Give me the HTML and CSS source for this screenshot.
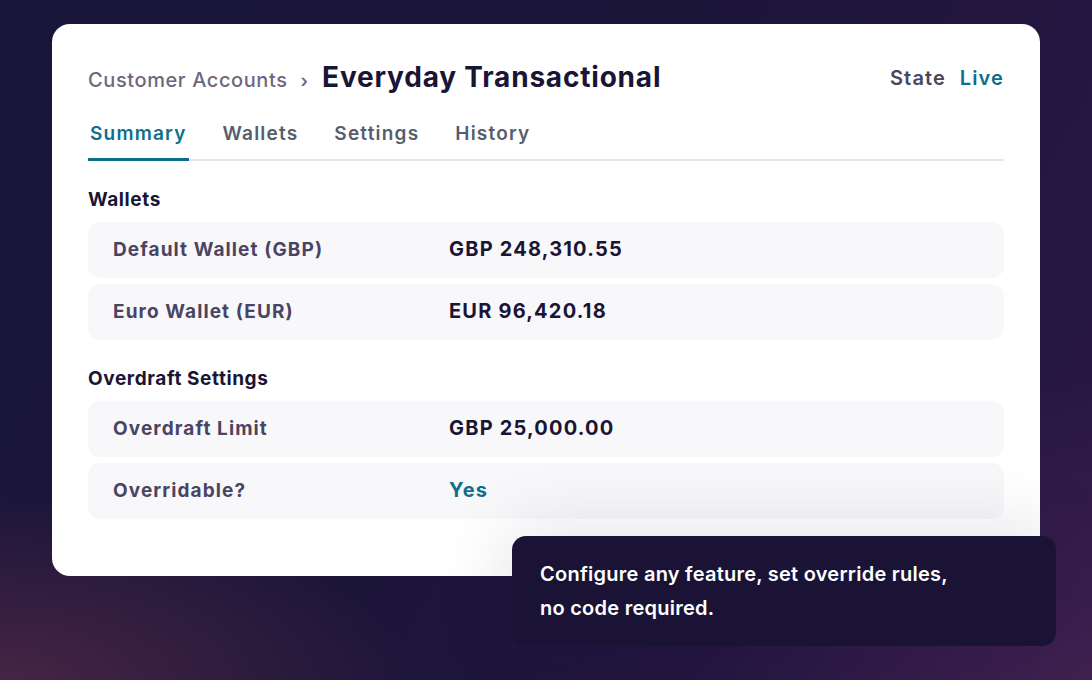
FILE: index.html
```html
<!DOCTYPE html>
<html lang="en">
<head>
    <meta charset="UTF-8">
    <meta name="viewport" content="width=device-width, initial-scale=1.0">
    <title>Everyday Transactional</title>
    <link rel="stylesheet" href="styles.css">
</head>
<body>
    <div class="card">
        <div class="cardHeader">
            <div class="crumbs">
                <span class="crumbParent">Customer Accounts</span>
                <span class="crumbSep">›</span>
                <span class="crumbTitle">Everyday Transactional</span>
            </div>
            <div class="state">
                <span class="stateLabel">State</span>
                <span class="stateValue">Live</span>
            </div>
        </div>
        <div class="tabs">
            <span class="tab active">Summary</span>
            <span class="tab">Wallets</span>
            <span class="tab">Settings</span>
            <span class="tab">History</span>
        </div>

        <p class="sectionTitle">Wallets</p>
        <div class="row">
            <span class="rowLabel">Default Wallet (GBP)</span>
            <span class="rowValue">GBP 248,310.55</span>
        </div>
        <div class="row">
            <span class="rowLabel">Euro Wallet (EUR)</span>
            <span class="rowValue">EUR 96,420.18</span>
        </div>

        <p class="sectionTitle">Overdraft Settings</p>
        <div class="row">
            <span class="rowLabel">Overdraft Limit</span>
            <span class="rowValue">GBP 25,000.00</span>
        </div>
        <div class="row">
            <span class="rowLabel">Overridable?</span>
            <span class="rowValue yes">Yes</span>
        </div>
    </div>

    <div class="tooltip">
        Configure any feature, set override rules,<br>no code required.
    </div>
</body>
</html>
```

FILE: styles.css
```css
html,body{
    margin: 0px;
    padding: 0px;
    height: 100%;
}
body{
    position: relative;
    overflow: hidden;
    padding: 24px 52px;
    box-sizing: border-box;
    font-family: "Inter", "Liberation Sans", sans-serif;
    background-color: #1b1538;
    background-image:
        radial-gradient(ellipse 420px 200px at 0px 690px, rgba(110, 50, 80, 0.55), rgba(110, 50, 80, 0) 100%),
        radial-gradient(ellipse 400px 300px at 1092px 680px, rgba(90, 45, 90, 0.45), rgba(90, 45, 90, 0) 100%),
        linear-gradient(120deg, #19163a 0%, #1b1538 45%, #2b1748 100%);
}
.card{
    width: 988px;
    height: 552px;
    box-sizing: border-box;
    padding: 36px 36px;
    background-color: #ffffff;
    border-radius: 18px;
}
.cardHeader{
    display: flex;
    flex-direction: row;
    justify-content: space-between;
    align-items: center;
    height: 34px;
}
.crumbs{
    display: flex;
    align-items: baseline;
}
.crumbParent{
    font-size: 20px;
    font-weight: 500;
    letter-spacing: 0.6px;
    color: #6d6880;
}
.crumbSep{
    margin: 0px 14px 0px 13px;
    font-size: 18px;
    font-weight: 600;
    color: #6d6880;
}
.crumbTitle{
    font-size: 28px;
    font-weight: 700;
    letter-spacing: 0.8px;
    color: #1a1535;
}
.state{
    display: flex;
    align-items: baseline;
    gap: 14px;
    font-size: 20px;
    font-weight: 600;
    letter-spacing: 1.1px;
    padding-top: 2px;
}
.stateLabel{
    color: #4a4462;
}
.stateValue{
    color: #0e6e8c;
}
.tabs{
    display: flex;
    flex-direction: row;
    gap: 32px;
    margin-top: 28px;
    border-bottom: 2px solid #e3e6ea;
}
.tab{
    padding: 0px 2px 12px;
    margin-bottom: -2px;
    font-size: 19px;
    font-weight: 600;
    line-height: 24px;
    letter-spacing: 1.2px;
    color: #545e6c;
    border-bottom: 3px solid transparent;
}
.tab.active{
    color: #0e6e8c;
    border-bottom-color: #0e6e8c;
}
.sectionTitle{
    margin: 28px 0px 11px;
    font-size: 19px;
    font-weight: 700;
    line-height: 22px;
    letter-spacing: 0.6px;
    color: #1a1535;
}
.row{
    display: flex;
    flex-direction: row;
    align-items: center;
    height: 56px;
    margin-bottom: 6px;
    padding-left: 25px;
    padding-bottom: 2px;
    box-sizing: border-box;
    background-color: #f8f8fb;
    border-radius: 12px;
}
.rowLabel{
    width: 336px;
    font-size: 19px;
    font-weight: 700;
    letter-spacing: 1.1px;
    color: #4a4462;
}
.rowValue{
    font-size: 20px;
    font-weight: 700;
    letter-spacing: 1.2px;
    color: #1a1535;
}
.rowValue.yes{
    color: #0e6e8c;
}
.tooltip{
    position: absolute;
    left: 512px;
    top: 536px;
    width: 544px;
    height: 110px;
    box-sizing: border-box;
    padding: 21px 28px;
    background-color: #1a1335;
    border-radius: 14px;
    font-size: 20px;
    font-weight: 600;
    line-height: 34px;
    letter-spacing: 0.25px;
    color: #ffffff;
    box-shadow: 0px 0px 80px rgba(20, 15, 50, 0.14);
}
```
